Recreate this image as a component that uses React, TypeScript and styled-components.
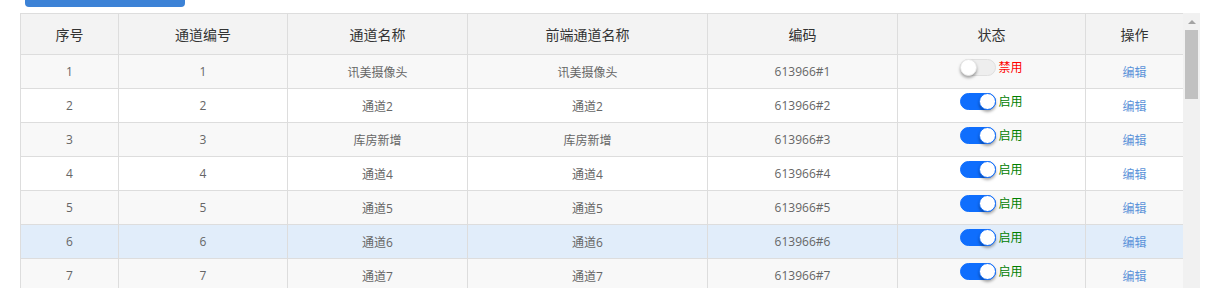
import React from "react";
import styled, { createGlobalStyle } from "styled-components";

const Global = createGlobalStyle`
  html, body { margin: 0; padding: 0; background: #fff; }
  body { font-family: "Open Sans", "Noto Sans CJK SC", sans-serif; overflow: hidden; }
`;

const Page = styled.div`
  width: 1217px;
  height: 288px;
  overflow: hidden;
`;

const TopButton = styled.div`
  margin-left: 25px;
  width: 160px;
  height: 7px;
  background: #3c82d6;
  border-radius: 0 0 4px 4px;
`;

const Panel = styled.div`
  margin: 6px 0 0 20px;
  width: 1180px;
  display: flex;
  align-items: stretch;
  height: 275px;
`;

const TableWrap = styled.div`
  width: 1163px;
  overflow: hidden;
`;

const Table = styled.table`
  width: 1163px;
  border-collapse: collapse;
  table-layout: fixed;
  border: 1px solid #dddddd;
  font-size: 12px;
`;

const Th = styled.th`
  height: 40px;
  padding: 0;
  background: #f3f3f3;
  border: 1px solid #dddddd;
  color: #333;
  font-weight: normal;
  font-size: 14px;
  text-align: center;
`;

const Tr = styled.tr<{ $striped: boolean; $hover: boolean }>`
  background: ${(p) => (p.$hover ? "#e1edfa" : p.$striped ? "#f8f8f8" : "#ffffff")};
`;

const Td = styled.td`
  height: 33px;
  padding: 0;
  border: 1px solid #dddddd;
  color: #666;
  text-align: center;
  vertical-align: middle;
`;

const StatusBox = styled.div`
  display: inline-flex;
  align-items: center;
  gap: 2px;
  transform: translateY(-2px);
`;

const Switch = styled.span<{ $on: boolean }>`
  position: relative;
  display: inline-block;
  width: 36px;
  height: 17px;
  border-radius: 9px;
  box-sizing: border-box;
  background: ${(p) => (p.$on ? "#0f6efd" : "#eeeeee")};
  border: 1px solid ${(p) => (p.$on ? "#0f6efd" : "#dfdfdf")};
`;

const Knob = styled.span<{ $on: boolean }>`
  position: absolute;
  top: -1px;
  left: ${(p) => (p.$on ? "18px" : "-1px")};
  width: 17px;
  height: 17px;
  box-sizing: border-box;
  border-radius: 50%;
  background: #fff;
  border: 1px solid ${(p) => (p.$on ? "#0f6efd" : "#e6e6e6")};
  box-shadow: 0 2px 3px rgba(0, 0, 0, 0.35);
`;

const StateLabel = styled.span<{ $on: boolean }>`
  color: ${(p) => (p.$on ? "#008000" : "#ff0000")};
  font-size: 12px;
  line-height: 16px;
`;

const EditLink = styled.a`
  color: #5b93d9;
  text-decoration: none;
  font-size: 12px;
`;

const ScrollTrack = styled.div`
  width: 17px;
  background: #f1f1f1;
  display: flex;
  flex-direction: column;
  align-items: center;
`;

const ArrowUp = styled.div`
  margin-top: 7px;
  width: 0;
  height: 0;
  border-left: 4px solid transparent;
  border-right: 4px solid transparent;
  border-bottom: 4px solid #a3a3a3;
`;

const Thumb = styled.div`
  margin-top: 6px;
  width: 13px;
  height: 69px;
  background: #c1c1c1;
`;

const widths = [98, 169, 180, 240, 190, 188, 98];
const headers = ["序号", "通道编号", "通道名称", "前端通道名称", "编码", "状态", "操作"];

const rows = [
  { id: 1, name: "讯美摄像头", on: false },
  { id: 2, name: "通道2", on: true },
  { id: 3, name: "库房新增", on: true },
  { id: 4, name: "通道4", on: true },
  { id: 5, name: "通道5", on: true },
  { id: 6, name: "通道6", on: true },
  { id: 7, name: "通道7", on: true },
];

export default function App() {
  return (
    <Page>
      <Global />
      <TopButton />
      <Panel>
        <TableWrap>
          <Table>
            <colgroup>
              {widths.map((w, i) => (
                <col key={i} style={{ width: w }} />
              ))}
            </colgroup>
            <thead>
              <tr>
                {headers.map((h) => (
                  <Th key={h}>{h}</Th>
                ))}
              </tr>
            </thead>
            <tbody>
              {rows.map((r, i) => (
                <Tr key={r.id} $striped={i % 2 === 0} $hover={r.id === 6}>
                  <Td>{r.id}</Td>
                  <Td>{r.id}</Td>
                  <Td>{r.name}</Td>
                  <Td>{r.name}</Td>
                  <Td>613966#{r.id}</Td>
                  <Td>
                    <StatusBox>
                      <Switch $on={r.on}>
                        <Knob $on={r.on} />
                      </Switch>
                      <StateLabel $on={r.on}>{r.on ? "启用" : "禁用"}</StateLabel>
                    </StatusBox>
                  </Td>
                  <Td>
                    <EditLink href="#">编辑</EditLink>
                  </Td>
                </Tr>
              ))}
            </tbody>
          </Table>
        </TableWrap>
        <ScrollTrack>
          <ArrowUp />
          <Thumb />
        </ScrollTrack>
      </Panel>
    </Page>
  );
}
